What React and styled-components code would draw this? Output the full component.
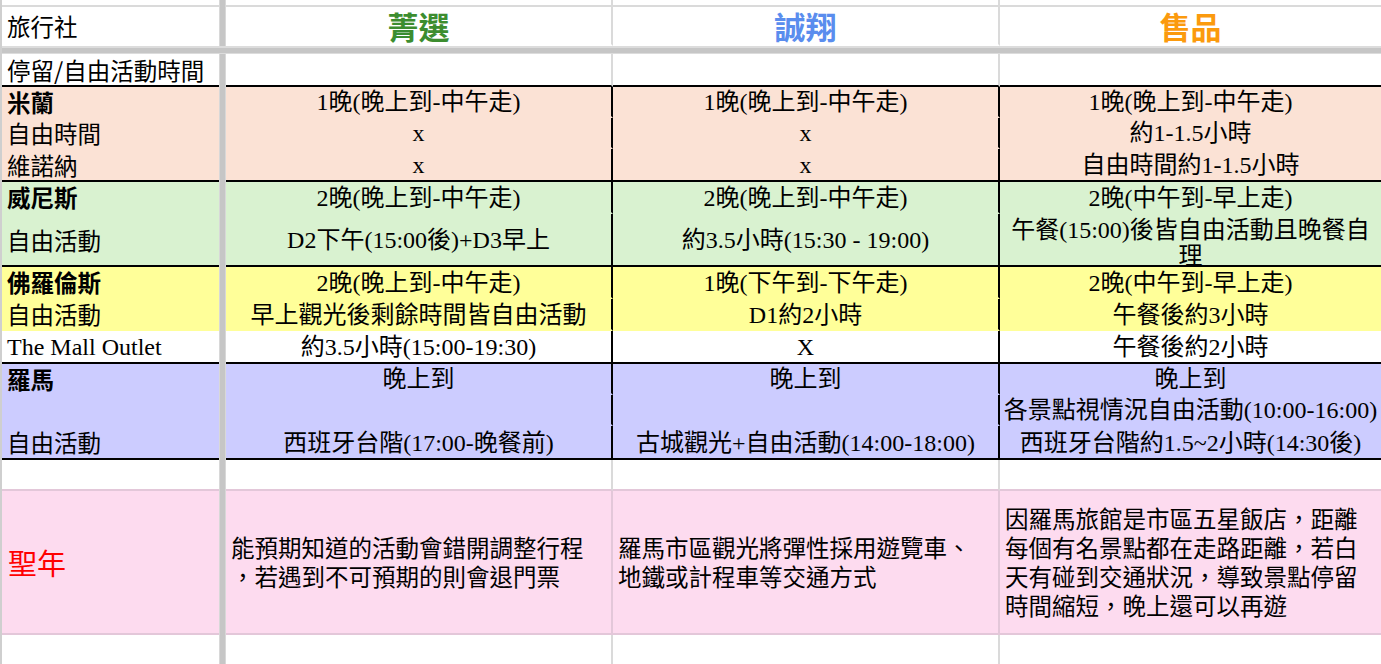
import React from 'react';
import styled, { createGlobalStyle } from 'styled-components';

const SANS = `"Noto Sans CJK TC", "Noto Sans", sans-serif`;
const SERIF = `"Liberation Serif", "Noto Sans CJK TC", serif`;

const INK = '#000';
const GRID = '#dadada';
const PINK_LINE = '#e3c7d9';

const PEACH = '#fbe2d5';
const GREEN = '#d9f2d0';
const YELLOW = '#ffff99';
const LAVENDER = '#ccccff';
const PINK = '#fddbef';

const agencies = [
  { name: '菁選', color: '#3c8d2f' },
  { name: '誠翔', color: '#5a8dee' },
  { name: '售品', color: '#fb9a0e' },
];

const bands = [
  {
    bg: PEACH,
    end: INK,
    rows: [
      { h: 31, label: '米蘭', bold: true, cells: ['1晚(晚上到-中午走)', '1晚(晚上到-中午走)', '1晚(晚上到-中午走)'] },
      { h: 31, label: '自由時間', cells: ['x', 'x', '約1-1.5小時'] },
      { h: 33, label: '維諾納', cells: ['x', 'x', '自由時間約1-1.5小時'] },
    ],
  },
  {
    bg: GREEN,
    end: INK,
    rows: [
      { h: 32, label: '威尼斯', bold: true, cells: ['2晚(晚上到-中午走)', '2晚(晚上到-中午走)', '2晚(中午到-早上走)'] },
      {
        h: 53,
        label: '自由活動',
        cells: ['D2下午(15:00後)+D3早上', '約3.5小時(15:30 - 19:00)', ['午餐(15:00)後皆自由活動且晚餐自', '理']],
      },
    ],
  },
  {
    bg: YELLOW,
    end: null,
    rows: [
      { h: 32, label: '佛羅倫斯', bold: true, cells: ['2晚(晚上到-中午走)', '1晚(下午到-下午走)', '2晚(中午到-早上走)'] },
      { h: 32, label: '自由活動', cells: ['早上觀光後剩餘時間皆自由活動', 'D1約2小時', '午餐後約3小時'] },
    ],
  },
  {
    bg: '#fff',
    end: INK,
    rows: [
      { h: 33, label: 'The Mall Outlet', serif: true, cells: ['約3.5小時(15:00-19:30)', 'X', '午餐後約2小時'] },
    ],
  },
  {
    bg: LAVENDER,
    end: INK,
    rows: [
      { h: 31, label: '羅馬', bold: true, cells: ['晚上到', '晚上到', '晚上到'] },
      { h: 31, label: '', cells: ['', '', '各景點視情況自由活動(10:00-16:00)'] },
      { h: 34, label: '自由活動', cells: ['西班牙台階(17:00-晚餐前)', '古城觀光+自由活動(14:00-18:00)', '西班牙台階約1.5~2小時(14:30後)'] },
    ],
  },
];

const notes = [
  ['能預期知道的活動會錯開調整行程', '，若遇到不可預期的則會退門票'],
  ['羅馬市區觀光將彈性採用遊覽車、', '地鐵或計程車等交通方式'],
  ['因羅馬旅館是市區五星飯店，距離', '每個有名景點都在走路距離，若白', '天有碰到交通狀況，導致景點停留', '時間縮短，晚上還可以再遊'],
];

export default function App() {
  return (
    <>
      <GlobalStyle />
      <Sheet>
        <Row $h={7}>
          <Blank $line={GRID} />
          <FreezeCol />
          <Blank $line={GRID} $vline={GRID} />
          <Blank $line={GRID} $vline={GRID} />
          <Blank $line={GRID} />
        </Row>
        <Row $h={39}>
          <LabelCell $line="transparent">旅行社</LabelCell>
          <FreezeCol />
          {agencies.map((a, i) => (
            <HeaderCell key={a.name} $color={a.color} $vline={i < 2 ? GRID : null}>
              {a.name}
            </HeaderCell>
          ))}
        </Row>
        <FreezeRow />
        <Row $h={33}>
          <LabelCell $line={INK}>停留/自由活動時間</LabelCell>
          <FreezeCol />
          <Blank $line={INK} $vline={GRID} />
          <Blank $line={INK} $vline={GRID} />
          <Blank $line={INK} />
        </Row>

        {bands.map((band, bi) =>
          band.rows.map((row, ri) => {
            const line = ri === band.rows.length - 1 && band.end ? band.end : 'transparent';
            return (
              <Row key={`${bi}-${ri}`} $h={row.h}>
                <LabelCell $bg={band.bg} $line={line} $bold={row.bold} $serif={row.serif}>
                  {row.label}
                </LabelCell>
                <FreezeCol />
                {row.cells.map((c, ci) => (
                  <DataCell key={ci} $bg={band.bg} $line={line} $vline={ci < 2 ? INK : null}>
                    {Array.isArray(c) ? (
                      <WrapBlock>
                        {c.map((l) => (
                          <Wrapped key={l}>{l}</Wrapped>
                        ))}
                      </WrapBlock>
                    ) : (
                      c
                    )}
                  </DataCell>
                ))}
              </Row>
            );
          })
        )}

        <Row $h={31}>
          <Blank $line={PINK_LINE} />
          <FreezeCol />
          <Blank $line={PINK_LINE} $vline={GRID} />
          <Blank $line={PINK_LINE} $vline={GRID} />
          <Blank $line={PINK_LINE} />
        </Row>
        <Row $h={144}>
          <YearCell>聖年</YearCell>
          <FreezeCol />
          {notes.map((lines, i) => (
            <NoteCell key={i} $vline={i < 2 ? PINK_LINE : null}>
              {lines.map((l) => (
                <NoteLine key={l}>{l}</NoteLine>
              ))}
            </NoteCell>
          ))}
        </Row>
        <Row $h={40}>
          <Blank />
          <FreezeCol />
          <Blank $vline={GRID} />
          <Blank $vline={GRID} />
          <Blank />
        </Row>
      </Sheet>
    </>
  );
}

const GlobalStyle = createGlobalStyle`
  html, body {
    margin: 0;
    padding: 0;
    background: #fff;
    overflow: hidden;
  }
  body {
    font-family: ${SANS};
    color: #000;
  }
`;

const Sheet = styled.div`
  width: 1381px;
  height: 664px;
  overflow: hidden;
  box-sizing: border-box;
  border-left: 2px solid #cfcfcf;
  display: flex;
  flex-direction: column;
`;

const Row = styled.div`
  display: grid;
  grid-template-columns: 217px 7px 387px 387px 1fr;
  grid-template-rows: ${(p) => p.$h}px;
  height: ${(p) => p.$h}px;
  flex: none;
`;

const Blank = styled.div`
  box-sizing: border-box;
  min-height: 0;
  background: ${(p) => p.$bg || '#fff'};
  border-bottom: 2px solid ${(p) => p.$line || 'transparent'};
  border-right: ${(p) => (p.$vline ? `2px solid ${p.$vline}` : 'none')};
`;

const FreezeCol = styled.div`
  box-sizing: border-box;
  background: #c6c6c6;
  border-left: 1px solid #d8d8d8;
  border-right: 1px solid #d8d8d8;
`;

const FreezeRow = styled.div`
  box-sizing: border-box;
  height: 8px;
  flex: none;
  background: #c6c6c6;
  border-top: 2px solid #dcdcdc;
  border-bottom: 1px solid #dcdcdc;
`;

const LabelCell = styled(Blank)`
  display: flex;
  align-items: center;
  padding: 0 0 0 5px;
  white-space: nowrap;
  font-family: ${(p) => (p.$serif ? SERIF : SANS)};
  font-weight: ${(p) => (p.$bold ? 700 : 400)};
  font-size: ${(p) => (p.$serif ? 24 : 23.5)}px;
  line-height: 28px;
`;

const HeaderCell = styled(Blank)`
  display: flex;
  align-items: center;
  justify-content: center;
  font-family: ${SANS};
  font-weight: 700;
  font-size: 31px;
  line-height: 34px;
  color: ${(p) => p.$color};
`;

const DataCell = styled(Blank)`
  display: flex;
  flex-direction: column;
  align-items: center;
  justify-content: center;
  padding: 1px 2px 0;
  white-space: nowrap;
  font-family: ${SERIF};
  font-size: 24px;
  line-height: 28px;
`;

const WrapBlock = styled.div`
  display: flex;
  flex-direction: column;
  align-items: center;
  padding-top: 5px;
`;

const Wrapped = styled.span`
  display: block;
  line-height: 26px;
`;

const YearCell = styled(Blank).attrs({ $bg: PINK, $line: PINK_LINE })`
  display: flex;
  align-items: center;
  padding-left: 6px;
  font-size: 29px;
  line-height: 34px;
  color: #ff0000;
`;

const NoteCell = styled(Blank).attrs({ $bg: PINK, $line: PINK_LINE })`
  display: flex;
  flex-direction: column;
  justify-content: center;
  padding: 0 0 0 5px;
  white-space: nowrap;
  overflow: hidden;
  font-size: 23.5px;
  line-height: 29px;
`;

const NoteLine = styled.div`
  height: 29px;
`;
